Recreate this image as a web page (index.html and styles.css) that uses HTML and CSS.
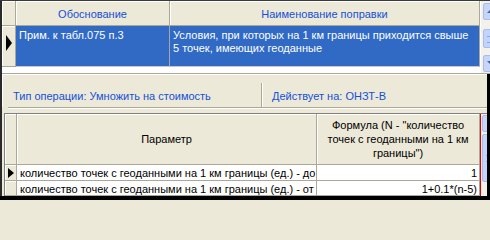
FILE: index.html
```html
<!DOCTYPE html>
<html>
<head>
<meta charset="utf-8">
<link rel="stylesheet" href="styles.css">
</head>
<body>
<div class="screen">
  <div class="topline"></div>
  <div class="main">
    <div class="leftedge"></div>
    <div class="content">
      <div class="top">
        <div class="grid1">
          <div class="ind hd"></div>
          <div class="hd c1">Обоснование</div>
          <div class="hd c2">Наименование поправки</div>
          <div class="ind selind"><span class="arrow big"></span></div>
          <div class="sel c1">Прим. к табл.075 п.3</div>
          <div class="sel c2">Условия, при которых на 1 км границы приходится свыше 5 точек, имеющих геоданные</div>
          <div class="empty"></div>
        </div>
        <div class="vscroll">
          <div class="sbtn up"><span class="tri-up"></span></div>
          <div class="sbtn thumb"><span class="grip"></span></div>
          <div class="sbtn down"><span class="tri-down"></span></div>
        </div>
      </div>
      <div class="lower">
        <div class="lowerbody">
          <div class="info">
            <div class="lbl first">Тип операции: Умножить на стоимость</div>
            <div class="sep"></div>
            <div class="lbl">Действует на: ОНЗТ-В</div>
          </div>
          <div class="bevel"></div>
          <div class="grid2wrap">
            <div class="grid2">
              <div class="ind2 hd2"></div>
              <div class="hd2 p1">Параметр</div>
              <div class="hd2 p2">Формула (N - "количество точек с геоданными на 1 км границы")</div>
              <div class="ind2 rowind"><span class="arrow small"></span></div>
              <div class="r p1">количество точек с геоданными на 1 км границы (ед.) - до</div>
              <div class="r p2 num">1</div>
              <div class="ind2 rowind"></div>
              <div class="r p1">количество точек с геоданными на 1 км границы (ед.) - от</div>
              <div class="r p2 num">1+0.1*(n-5)</div>
            </div>
            <div class="redline"></div>
            <div class="vscroll2">
              <div class="sbtn2 up2"></div>
              <div class="sbtn2 thumb2"><span class="grip2"></span></div>
            </div>
          </div>
        </div>
        <div class="rightedge"></div>
      </div>
    </div>
  </div>
  <div class="bottomline"></div>
</div>
</body>
</html>
```

FILE: styles.css
```css
html, body {
  margin: 0;
  padding: 0;
  background: #ece9d8;
  overflow: hidden;
}
.screen {
  width: 490px;
  height: 200px;
  display: flex;
  flex-direction: column;
  overflow: hidden;
  font-family: "Liberation Sans", Arial, sans-serif;
  font-size: 11px;
}
.topline {
  height: 1px;
  flex: none;
  background: #3a3a3a;
}
.main {
  height: 195px;
  flex: none;
  display: flex;
}
.bottomline {
  height: 4px;
  flex: none;
  background: #000;
}
.leftedge {
  width: 2px;
  flex: none;
  background: #2a2a2a;
}
.content {
  width: 488px;
  flex: none;
  display: flex;
  flex-direction: column;
}
.top {
  display: flex;
  height: 72px;
  flex: none;
  border-bottom: 1px solid #aca899;
  background: #fff;
}
.grid1 {
  display: grid;
  grid-template-columns: 14px 154px 310px;
  grid-template-rows: 25px 41px 1fr;
  width: 478px;
  flex: none;
}
.hd {
  background: #ece9d8;
  border-right: 1px solid #aca899;
  border-bottom: 1px solid #aca899;
  box-shadow: inset 1px 1px 0 #fff;
  color: #1450d8;
  display: flex;
  align-items: center;
  justify-content: center;
  padding-top: 1px;
  box-sizing: border-box;
}
.ind {
  background: #ece9d8;
  border-right: 1px solid #aca899;
  border-bottom: 1px solid #aca899;
  box-shadow: inset 1px 1px 0 #fff;
}
.selind {
  display: flex;
  align-items: center;
  padding-left: 4px;
  box-sizing: border-box;
}
.sel {
  background: #316ac5;
  color: #fff;
  border-right: 1px solid #a6a6a6;
  border-bottom: 1px solid #c8c8c8;
  padding: 3px 4px 0 3px;
  line-height: 13px;
  box-sizing: border-box;
}
.empty {
  grid-column: 1 / 4;
  background: #fff;
}
.arrow {
  display: block;
  width: 0;
  height: 0;
  border-left: 6px solid #000;
}
.arrow.big {
  border-top: 8px solid transparent;
  border-bottom: 8px solid transparent;
  margin-top: -6px;
}
.arrow.small {
  border-top: 5px solid transparent;
  border-bottom: 5px solid transparent;
}
.vscroll {
  flex: 1;
  background: #f3f1ea;
  border-left: 1px solid #fff;
  position: relative;
  overflow: hidden;
}
.sbtn {
  position: absolute;
  left: 2px;
  width: 14px;
  background: #c6d6fa;
  border: 1px solid #a9bde9;
  border-radius: 2px;
  box-sizing: border-box;
}
.sbtn.up { top: 2px; height: 17px; }
.sbtn.thumb { top: 28px; height: 19px; background: #c3d4fc; }
.sbtn.down { top: 54px; height: 17px; }
.tri-up, .tri-down {
  position: absolute;
  left: 3px;
  top: 5px;
  width: 0;
  height: 0;
  border-left: 4px solid transparent;
  border-right: 4px solid transparent;
}
.tri-up { border-bottom: 4px solid #4d6185; }
.tri-down { border-top: 4px solid #4d6185; }
.grip {
  position: absolute;
  left: 3px;
  top: 6px;
  width: 6px;
  height: 5px;
  border-top: 1px solid #8ca7de;
  border-bottom: 1px solid #8ca7de;
}
.lower {
  height: 122px;
  flex: none;
  display: flex;
}
.lowerbody {
  width: 485px;
  flex: none;
  display: flex;
  flex-direction: column;
}
.rightedge {
  width: 3px;
  flex: none;
  background: #000;
}
.info {
  height: 33px;
  flex: none;
  display: flex;
  align-items: stretch;
  box-shadow: inset 1px 1px 0 #fff;
  padding-left: 11px;
  box-sizing: border-box;
}
.lbl {
  color: #1450d8;
  display: flex;
  align-items: center;
  padding-top: 11px;
  box-sizing: border-box;
}
.lbl.first { width: 248px; }
.sep {
  width: 0;
  border-left: 1px solid #aca899;
  border-right: 1px solid #fff;
  margin: 9px 9px 0 0;
}
.bevel {
  height: 0;
  flex: none;
  border-top: 1px solid #aca899;
  border-bottom: 1px solid #fff;
  margin-left: 6px;
}
.grid2wrap {
  margin-top: 4px;
  margin-left: 2px;
  height: 83px;
  flex: none;
  display: flex;
  border-top: 1px solid #808080;
  border-left: 1px solid #808080;
  background: #fff;
  box-sizing: border-box;
}
.grid2 {
  display: grid;
  grid-template-columns: 12px 300px 163px;
  grid-template-rows: 51px 16px 15px;
  width: 475px;
  flex: none;
  align-content: start;
}
.hd2 {
  background: #ece9d8;
  border-right: 1px solid #aca899;
  border-bottom: 1px solid #aca899;
  box-shadow: inset 1px 1px 0 #fff;
  color: #000;
  display: flex;
  align-items: center;
  justify-content: center;
  text-align: center;
  line-height: 14px;
  box-sizing: border-box;
}
.hd2.p2 { padding: 0 8px; }
.ind2 {
  background: #ece9d8;
  border-right: 1px solid #aca899;
  border-bottom: 1px solid #aca899;
  box-shadow: inset 1px 1px 0 #fff;
}
.rowind {
  display: flex;
  align-items: center;
  padding-left: 3px;
  box-sizing: border-box;
}
.r {
  border-right: 1px solid #aca899;
  border-bottom: 1px solid #aca899;
  white-space: nowrap;
  overflow: hidden;
  padding: 1px 2px 0 3px;
  line-height: 14px;
  box-sizing: border-box;
  color: #000;
}
.num { text-align: right; }
.redline {
  width: 1px;
  flex: none;
  background: #e00000;
}
.vscroll2 {
  flex: 1;
  background: #f3f1ea;
  position: relative;
  overflow: hidden;
}
.sbtn2 {
  position: absolute;
  left: 1px;
  width: 12px;
  background: #c6d6fa;
  border: 1px solid #a9bde9;
  border-radius: 2px;
  box-sizing: border-box;
}
.up2 { top: 1px; height: 17px; }
.thumb2 { top: 20px; height: 48px; background: #c3d4fc; }
.grip2 {
  position: absolute;
  left: 3px;
  top: 20px;
  width: 6px;
  height: 5px;
  border-top: 1px solid #8ca7de;
  border-bottom: 1px solid #8ca7de;
}
```
